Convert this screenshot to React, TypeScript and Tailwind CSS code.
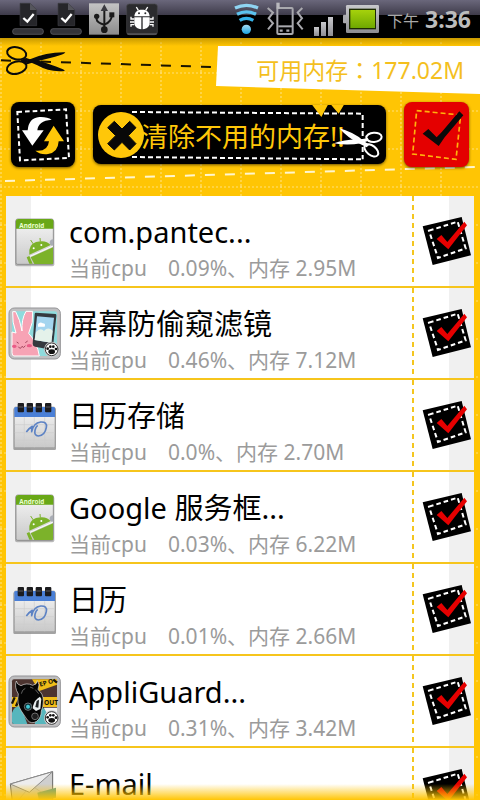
import React, { useState } from "react";

type IconName = "android" | "bunny" | "calendar" | "guard" | "mail";

interface AppProcess {
  id: number;
  name: string;
  icon: IconName;
  cpu: string;
  memory: string;
}

const processes: AppProcess[] = [
  { id: 1, name: "com.pantec...", icon: "android", cpu: "0.09%", memory: "2.95M" },
  { id: 2, name: "屏幕防偷窥滤镜", icon: "bunny", cpu: "0.46%", memory: "7.12M" },
  { id: 3, name: "日历存储", icon: "calendar", cpu: "0.0%", memory: "2.70M" },
  { id: 4, name: "Google 服务框...", icon: "android", cpu: "0.03%", memory: "6.22M" },
  { id: 5, name: "日历", icon: "calendar", cpu: "0.01%", memory: "2.66M" },
  { id: 6, name: "AppliGuard...", icon: "guard", cpu: "0.31%", memory: "3.42M" },
  { id: 7, name: "E-mail", icon: "mail", cpu: "0.02%", memory: "4.18M" },
];

/* ---------- status bar ---------- */

function FileCheckIcon() {
  return (
    <svg viewBox="36 0 96 114" className="h-[38px] w-8">
      <path d="M60 10H90L110 30V77H60Z" fill="#26262a" stroke="#3d3d42" strokeWidth="2" />
      <path d="M90 10V30H110Z" fill="#55555c" />
      <path d="M70 54L82 65L101 42" fill="none" stroke="#fff" strokeWidth="7" />
      <rect x="38" y="86" width="92" height="17" rx="7" fill="#333338" stroke="#6a6a70" strokeWidth="2" />
    </svg>
  );
}

function UsbIcon() {
  return (
    <svg viewBox="264 0 96 114" className="h-[38px] w-8">
      <defs>
        <linearGradient id="usb-bg" x1="0" y1="0" x2="0" y2="1">
          <stop offset="0" stopColor="#c4c4c4" />
          <stop offset="1" stopColor="#8c8c8c" />
        </linearGradient>
      </defs>
      <rect x="267" y="10" width="90" height="94" fill="url(#usb-bg)" />
      <g fill="none" stroke="#1a1a1a" strokeWidth="6">
        <path d="M313 28V90" />
        <path d="M290 50V58Q291 68 313 74Q335 66 336 44" />
      </g>
      <path d="M313 13L302 33H324Z" fill="#3a3a3f" />
      <circle cx="290" cy="49" r="8" fill="#1a1a1a" />
      <rect x="328" y="37" width="15" height="15" fill="#1a1a1a" />
      <circle cx="313" cy="89" r="10" fill="#1a1a1a" />
    </svg>
  );
}

function BugIcon() {
  return (
    <svg viewBox="378 0 96 114" className="h-[38px] w-8">
      <rect x="380" y="12" width="92" height="92" rx="8" fill="#2b2b2e" stroke="#48484c" strokeWidth="2" />
      <path d="M382 102H470" stroke="#8d8d92" strokeWidth="2" />
      <g fill="#fff">
        <path d="M403 49C404 34 414 29 426 29S448 34 449 49Z" />
        <path d="M403 52H424V88C410 86 403 78 403 68Z" />
        <path d="M428 52H449V68C449 78 442 86 428 88Z" />
      </g>
      <g fill="none" stroke="#fff" strokeWidth="4">
        <path d="M415 31L409 21M437 31L443 21" />
        <path d="M403 57H393V50M403 66H390M403 74H393V80" />
        <path d="M449 57H459V50M449 66H462M449 74H459V80" />
      </g>
      <circle cx="417" cy="40" r="3" fill="#2b2b2e" />
      <circle cx="436" cy="40" r="3" fill="#2b2b2e" />
    </svg>
  );
}

function StatusRightIcons() {
  return (
    <svg viewBox="-21 0 435 114" className="h-[38px] w-[145px]">
      <defs>
        <linearGradient id="wifi" x1="0" y1="0" x2="0" y2="1">
          <stop offset="0" stopColor="#a5dcf5" />
          <stop offset="1" stopColor="#1aa3e0" />
        </linearGradient>
        <linearGradient id="metal" x1="0" y1="0" x2="0" y2="1">
          <stop offset="0" stopColor="#c8c8cc" />
          <stop offset="1" stopColor="#8e8e92" />
        </linearGradient>
        <linearGradient id="cell" x1="0" y1="0" x2="0" y2="1">
          <stop offset="0" stopColor="#a6d20c" />
          <stop offset="1" stopColor="#6fa800" />
        </linearGradient>
      </defs>
      <g fill="none" stroke="#3cb5ea" strokeWidth="10">
        <path d="M-18 24Q16 8 51 24" stroke="#8fd4f2" />
        <path d="M-12 43Q16 28 45 43" stroke="#5cc2ee" />
        <path d="M-4 61Q16 49 37 61" stroke="#34b1e8" />
      </g>
      <circle cx="16" cy="88" r="14" fill="url(#wifi)" />

      <g fill="none" stroke="#a9a9ae" strokeWidth="6">
        <rect x="109" y="24" width="46" height="78" rx="3" />
        <path d="M112 79H153" />
        <path d="M80 24L96 38L83 55L96 70L81 88M184 24L170 38L183 55L170 70L185 88" strokeWidth="6" />
      </g>
      <rect x="106" y="8" width="10" height="18" fill="#b9b9be" />
      <path d="M116 92H125M136 92H145" stroke="#a9a9ae" strokeWidth="7" />

      <rect x="219" y="81" width="15" height="27" fill="url(#metal)" />
      <rect x="240" y="66" width="15" height="42" fill="url(#metal)" />
      <rect x="261" y="51" width="15" height="57" fill="url(#metal)" />

      <rect x="306" y="44" width="14" height="26" rx="3" fill="#aaaaae" />
      <rect x="315" y="15" width="99" height="84" rx="4" fill="url(#metal)" />
      <rect x="324" y="26" width="81" height="62" fill="#1c2a02" />
      <rect x="328" y="30" width="74" height="54" fill="url(#cell)" />
    </svg>
  );
}

function StatusBar() {
  return (
    <div className="flex h-[38px] shrink-0 items-center justify-between bg-[linear-gradient(#6a677b_0px,#3e3b4a_15px,#000_15px)] pr-[9px] pl-3">
      <div className="flex gap-[6px]">
        <FileCheckIcon />
        <FileCheckIcon />
        <UsbIcon />
        <BugIcon />
      </div>
      <div className="flex items-center">
        <StatusRightIcons />
        <span className="mt-1 ml-2 text-base text-[#a8a8a8]">下午</span>
        <span className="ml-[6px] text-[23px] font-bold text-[#bcbcbc]">3:36</span>
      </div>
    </div>
  );
}

/* ---------- header ---------- */

function StitchedBackground() {
  return (
    <svg className="absolute inset-0 h-full w-full" aria-hidden="true">
      <defs>
        <pattern id="stitches" width="40" height="38" y="34" patternUnits="userSpaceOnUse">
          <path d="M1 0V38" stroke="#ffe48a" strokeWidth="1" strokeDasharray="2 2" />
          <path d="M0 1H40" stroke="#ffe07a" strokeWidth="1" strokeDasharray="2 2" />
        </pattern>
      </defs>
      <rect width="100%" height="100%" fill="url(#stitches)" />
    </svg>
  );
}

function CutLine() {
  return (
    <svg viewBox="0 114 648 180" className="h-[60px] w-[216px] shrink-0">
      <path d="M3 181L636 201" stroke="#1a1400" strokeWidth="6" strokeDasharray="30 30" />
      <g fill="none" stroke="#0a0a0a" strokeWidth="6">
        <ellipse cx="50" cy="160" rx="29" ry="18" transform="rotate(12 50 160)" />
        <ellipse cx="50" cy="203" rx="30" ry="18" transform="rotate(-14 50 203)" />
      </g>
      <path d="M72 172L90 178Q140 156 196 157Q192 164 165 170L106 185L72 196L84 184Z" fill="#0a0a0a" />
      <path d="M72 195L90 178L112 180L170 200Q196 209 194 213Q150 218 112 196L84 184Z" fill="#0a0a0a" />
      <circle cx="74" cy="183" r="8" fill="#0a0a0a" />
    </svg>
  );
}

function RefreshButton() {
  return (
    <button aria-label="刷新" className="h-[65px] w-16 rounded-lg bg-black shadow-[0_1px_3px_rgba(0,0,0,0.6)]">
      <svg viewBox="33 36 192 195" className="h-full w-full">
        <path d="M52 66L198 58L207 204L60 211Z" fill="none" stroke="#fff" strokeWidth="6" strokeDasharray="14 9" />
        <path d="M66 121H83Q86 84 118 81Q142 80 155 89Q114 92 112 121H131L97 167Z" fill="#fff" />
        <path d="M161 107L192 154H176Q174 188 144 192Q122 195 106 182Q144 186 147 154H132Z" fill="#ffc709" />
      </svg>
    </button>
  );
}

function CleanButton() {
  return (
    <button className="grid h-[59px] w-[293px] items-center rounded-lg bg-black shadow-[0_1px_3px_rgba(0,0,0,0.6)]">
      <svg viewBox="279 45 879 177" className="col-start-1 row-start-1 h-full w-full">
        <g fill="none" stroke="#fff" strokeWidth="6" strokeDasharray="15 9">
          <path d="M396 66L1088 71V208" />
          <path d="M396 201L1088 208" />
        </g>
        <path d="M936 44H984L964 81ZM993 44H1032L1016 71Z" fill="#ffc709" />
        <circle cx="363" cy="135" r="69" fill="#ffc709" />
        <path
          d="M343 94L366 117L389 94L408 113L385 137L408 161L389 180L366 157L343 180L323 161L347 137L323 113Z"
          fill="#080808"
          stroke="#080808"
          strokeWidth="3"
          strokeLinejoin="round"
        />
      </svg>
      <span className="col-start-1 row-start-1 mt-1 pl-12 text-left text-[27px] leading-10 whitespace-nowrap text-[#ffc709]">
        清除不用的内存!!
      </span>
      <svg viewBox="279 45 879 177" className="col-start-1 row-start-1 h-full w-full">
        <path d="M1018 115Q1060 126 1090 152L1108 164L1100 172L1076 160Q1044 144 1018 115Z" fill="#fff" />
        <path d="M1002 160Q1040 147 1076 149L1104 144L1106 152L1084 160Q1040 167 1002 160Z" fill="#fff" />
        <g fill="none" stroke="#fff" strokeWidth="6">
          <ellipse cx="1122" cy="142" rx="23" ry="14" transform="rotate(-4 1122 142)" />
          <ellipse cx="1114" cy="181" rx="24" ry="14" transform="rotate(38 1114 181)" />
        </g>
      </svg>
    </button>
  );
}

function SelectAllButton() {
  return (
    <button aria-label="全选" className="h-[65px] w-[65px] rounded-lg bg-[#e40000] shadow-[0_1px_3px_rgba(0,0,0,0.6)]">
      <svg viewBox="490 36 195 195" className="h-full w-full">
        <path d="M528 62L660 75L646 208L516 192Z" fill="none" stroke="#ffb20c" strokeWidth="5" strokeDasharray="15 9" />
        <path d="M546 131L563 117L588 142L604 125L656 64L668 76L612 142L594 168Z" fill="#0a0a0a" />
      </svg>
    </button>
  );
}

function Header() {
  return (
    <header className="relative shrink-0">
      <svg viewBox="0 0 480 30" preserveAspectRatio="none" className="absolute bottom-0 h-[30px] w-full" aria-hidden="true">
        <path d="M5 15L476 1" stroke="#fff6cf" strokeWidth="2" strokeDasharray="10 10" />
      </svg>
      <div className="h-2 bg-linear-to-b from-[#c99a00] to-transparent" />
      <div className="-mt-2 flex h-[60px]">
        <CutLine />
        <p className="mt-2 h-12 flex-1 bg-white pr-4 text-right font-['Noto_Sans','Noto_Sans_CJK_TC',sans-serif] text-[23px] leading-[48px] whitespace-nowrap text-[#f4bf1e] [clip-path:polygon(2px_0,100%_0,100%_100%,0_40px)]">
          <span lang="zh-TW">可用内存：177.02M</span>
        </p>
      </div>
      <div className="relative flex items-center justify-between pt-1 pr-[11px] pb-[29px] pl-[11px]">
        <RefreshButton />
        <CleanButton />
        <SelectAllButton />
      </div>
    </header>
  );
}

/* ---------- app icons ---------- */

function AndroidIcon() {
  return (
    <svg viewBox="24 57 159 159" className="h-[53px] w-[53px]">
      <defs>
        <linearGradient id="paper" x1="0" y1="0" x2="0" y2="1">
          <stop offset="0" stopColor="#f6f6f6" />
          <stop offset="1" stopColor="#c9c9c9" />
        </linearGradient>
      </defs>
      <rect x="45" y="72" width="118" height="139" rx="6" fill="#8b8b8b" opacity="0.6" />
      <rect x="48" y="69" width="112" height="136" rx="5" fill="url(#paper)" stroke="#777" strokeWidth="2" />
      <path d="M48 98V76Q48 69 56 69H152Q160 69 160 76V98Z" fill="#69a817" />
      <text x="58" y="97" fontSize="19" fontWeight="bold" fill="#eaffd0">
        Android
      </text>
      <path d="M160 130Q149 131 149 140Q149 149 160 150Z" fill="#a9adb5" />
      <g fill="#7cb22a">
        <path d="M88 176Q84 146 108 138Q138 130 152 147Z" />
        <path d="M92 184L159 154V204H103Z" />
        <path d="M80 184L88 180L98 203H88Z" />
      </g>
      <path d="M99 143L92 132M121 137L120 126" stroke="#7cb22a" strokeWidth="3" />
      <path d="M90 181L159 150" stroke="#fff" strokeWidth="3" />
      <circle cx="101" cy="157" r="3" fill="#fff" />
      <circle cx="124" cy="147" r="3" fill="#fff" />
    </svg>
  );
}

function CalendarIcon() {
  return (
    <svg viewBox="24 54 159 159" className="h-[53px] w-[53px]">
      <rect x="40" y="82" width="128" height="125" rx="4" fill="#7d7d7d" opacity="0.7" />
      <rect x="43" y="78" width="122" height="122" rx="4" fill="url(#paper)" stroke="#999" strokeWidth="2" />
      <path d="M43 108V82Q43 78 48 78H160Q165 78 165 82V108Z" fill="#4a7fd6" />
      <path d="M44 131H164M44 155H164M44 177H164M73 109V199M103 109V199M134 109V199" stroke="#cdcdcd" strokeWidth="2" />
      <path
        d="M79 153Q88 141 97 136Q94 146 95 152Q100 126 122 123Q142 122 139 139Q135 163 115 165Q102 164 105 148Q107 138 113 133"
        fill="none"
        stroke="#5c82c4"
        strokeWidth="5"
        strokeLinejoin="round"
      />
      <g fill="#1c1c1f">
        <rect x="53" y="66" width="19" height="28" rx="3" />
        <rect x="80" y="66" width="19" height="28" rx="3" />
        <rect x="107" y="66" width="19" height="28" rx="3" />
        <rect x="135" y="66" width="19" height="28" rx="3" />
      </g>
      <path d="M55 78H70M82 78H97M109 78H124M137 78H152" stroke="#59595e" strokeWidth="3" />
    </svg>
  );
}

function PawBadge() {
  return (
    <g>
      <circle cx="155" cy="460" r="23" fill="#c9c9cb" />
      <circle cx="155" cy="460" r="19" fill="#fff" stroke="#333" strokeWidth="3" />
      <ellipse cx="155" cy="467" rx="10" ry="7" fill="#111" />
      <circle cx="143" cy="458" r="4" fill="#111" />
      <circle cx="151" cy="452" r="4" fill="#111" />
      <circle cx="160" cy="452" r="4" fill="#111" />
      <circle cx="168" cy="459" r="4" fill="#111" />
    </g>
  );
}

function BunnyIcon() {
  return (
    <svg viewBox="24 333 159 159" className="h-[53px] w-[53px]">
      <rect x="27" y="336" width="154" height="153" rx="16" fill="#c0c0c2" stroke="#939396" strokeWidth="3" />
      <rect x="36" y="346" width="135" height="134" rx="6" fill="#8fdbdd" />
      <path
        d="M36 408L48 411Q36 378 38 347H47Q60 370 66 405Q64 370 78 346H98Q101 380 86 412Q112 440 118 480H42Q36 480 36 470Z"
        fill="#f7a3b5"
        stroke="#fff"
        strokeWidth="3"
      />
      <path d="M107 350L167 354Q170 355 169 361L158 462L105 452Q98 450 98 443L104 355Q104 351 107 350Z" fill="#34393f" />
      <path d="M111 361L162 365L154 440L104 432Z" fill="#a4d5ef" />
      <path d="M108 408Q122 393 132 405Q144 391 158 404L154 440L104 432Z" fill="#e4f2ea" />
      <path d="M114 384Q121 376 128 382Q138 382 134 392H114Z" fill="#fff" />
      <ellipse cx="43" cy="451" rx="7" ry="5" fill="#e95a86" />
      <ellipse cx="88" cy="449" rx="8" ry="5" fill="#e95a86" />
      <path d="M50 438L56 442M76 440L83 435M55 452Q61 462 66 451Q71 459 76 449" fill="none" stroke="#a5485f" strokeWidth="3" />
      <PawBadge />
    </svg>
  );
}

function GuardIcon() {
  return (
    <svg viewBox="24 72 159 159" className="h-[53px] w-[53px]">
      <rect x="27" y="75" width="154" height="153" rx="16" fill="#bdbdbf" stroke="#939396" strokeWidth="3" />
      <rect x="36" y="85" width="135" height="134" rx="6" fill="#4c3430" />
      <path d="M96 85H171V101L118 120Z" fill="#f0bd18" />
      <path d="M36 138H171V168H36Z" fill="#f0bd18" />
      <path d="M44 139L36 158M60 139L48 166M160 86L171 95" stroke="#18130a" strokeWidth="7" />
      <text x="120" y="107" fontSize="19" fontWeight="bold" fill="#17130a" transform="rotate(-16 120 107)">
        EP O
      </text>
      <text x="132" y="161" fontSize="20" fontWeight="bold" fill="#17130a">
        OUT
      </text>
      <path d="M132 170H171V219H142Z" fill="#f1f1f1" />
      <path d="M36 186Q42 164 62 165L82 219H42Q36 219 36 212Z" fill="#57b6bd" />
      <path d="M118 166Q142 170 148 219H104Z" fill="#57b6bd" />
      <path
        d="M49 90Q51 101 63 104Q80 94 98 103Q111 101 112 89Q121 100 114 116Q130 128 130 150Q130 168 124 180Q124 200 110 211Q94 221 82 207L64 180Q49 158 55 129Q42 108 49 90Z"
        fill="#050505"
        stroke="#dcdcdc"
        strokeWidth="2"
      />
      <path d="M76 112Q66 116 64 128M90 108L100 112M106 116L116 128" fill="none" stroke="#8f8f8f" strokeWidth="2" />
      <path d="M98 172Q101 147 120 137L124 144L121 174L108 180Z" fill="#e9eef0" />
      <path d="M106 168L110 150L117 146L115 170Z" fill="#1d2022" />
      <circle cx="84" cy="167" r="11" fill="#0b2b30" stroke="#6d7377" strokeWidth="3" />
      <circle cx="84" cy="167" r="6" fill="#43c9d6" />
      <circle cx="105" cy="196" r="10" fill="#1e1e1e" stroke="#6c6c6c" strokeWidth="3" />
      <g transform="translate(0 -259)">
        <PawBadge />
      </g>
    </svg>
  );
}

function MailIcon() {
  return (
    <svg viewBox="24 348 159 159" className="h-[53px] w-[53px]">
      <path d="M31 399L158 362V450L40 480Z" fill="#cfcfcf" stroke="#666" strokeWidth="3" />
      <path d="M31 399L88 424L158 362Z" fill="#ededed" stroke="#8c8c8c" strokeWidth="3" />
      <path d="M36 470L78 420M156 446L104 410" stroke="#a8a8a8" strokeWidth="2" />
      <path d="M112 425L168 410V440L118 452Z" fill="#5d9e92" />
    </svg>
  );
}

const appIcons: Record<IconName, () => React.ReactElement> = {
  android: AndroidIcon,
  bunny: BunnyIcon,
  calendar: CalendarIcon,
  guard: GuardIcon,
  mail: MailIcon,
};

/* ---------- list ---------- */

function StitchedCheckbox({ id, checked, onChange }: { id: string; checked: boolean; onChange: () => void }) {
  return (
    <span className="grid">
      <input
        id={id}
        type="checkbox"
        checked={checked}
        onChange={onChange}
        className="col-start-1 row-start-1 h-[52px] w-[50px] appearance-none"
      />
      <svg viewBox="246 60 150 156" className="pointer-events-none col-start-1 row-start-1 h-[52px] w-[50px]">
        <path d="M248 94L365 66L393 181L278 210Z" fill="#000" />
        <path d="M267 107L353 80L377 160L294 189Z" fill="none" stroke="#fff" strokeWidth="6" strokeDasharray="14 9" />
        {checked && <path d="M290 132L304 120L322 141L373 80L381 91L325 163Z" fill="#e60000" />}
      </svg>
    </span>
  );
}

export default function App() {
  const [selected, setSelected] = useState<number[]>(processes.map((p) => p.id));

  const toggle = (id: number) => {
    setSelected((prev) => (prev.includes(id) ? prev.filter((x) => x !== id) : [...prev, id]));
  };

  return (
    <div className="relative flex h-screen flex-col overflow-hidden bg-[#ffc504] font-['Noto_Sans','Noto_Sans_CJK_SC',sans-serif]">
      <StitchedBackground />
      <div className="relative flex min-h-0 flex-1 flex-col">
        <StatusBar />
        <Header />

        <ul className="mx-[6px] min-h-0 flex-1 overflow-y-auto [scrollbar-width:none]">
          {processes.map((process) => {
            const Icon = appIcons[process.icon];
            const inputId = `process-${process.id}`;
            return (
              <li
                key={process.id}
                className="flex border-b-2 border-[#f6c51c] bg-[linear-gradient(90deg,#f0f0f0_25px,#fff_25px,#fff_calc(100%-25px),#f0f0f0_calc(100%-25px))]"
              >
                <div className="flex w-[63px] shrink-0 items-center pl-[2px]">
                  <Icon />
                </div>
                <label htmlFor={inputId} className="min-w-0 flex-1 pt-4 pb-[6px] whitespace-nowrap">
                  <span className="block text-[29px] leading-10 text-black">{process.name}</span>
                  <span className="mt-1 block text-[21px] leading-6 text-[#9b9b9b]">
                    当前cpu　{process.cpu}、内存 {process.memory}
                  </span>
                </label>
                <div className="w-[2px] bg-[repeating-linear-gradient(#f4c61f_0_5px,transparent_5px_9px)]" />
                <div className="flex w-[60px] shrink-0 items-center justify-end pr-[2px]">
                  <StitchedCheckbox
                    id={inputId}
                    checked={selected.includes(process.id)}
                    onChange={() => toggle(process.id)}
                  />
                </div>
              </li>
            );
          })}
        </ul>
      </div>

      <div className="pointer-events-none absolute inset-x-0 bottom-0 h-4 bg-linear-to-t from-[#ffc504] to-transparent" />
    </div>
  );
}
